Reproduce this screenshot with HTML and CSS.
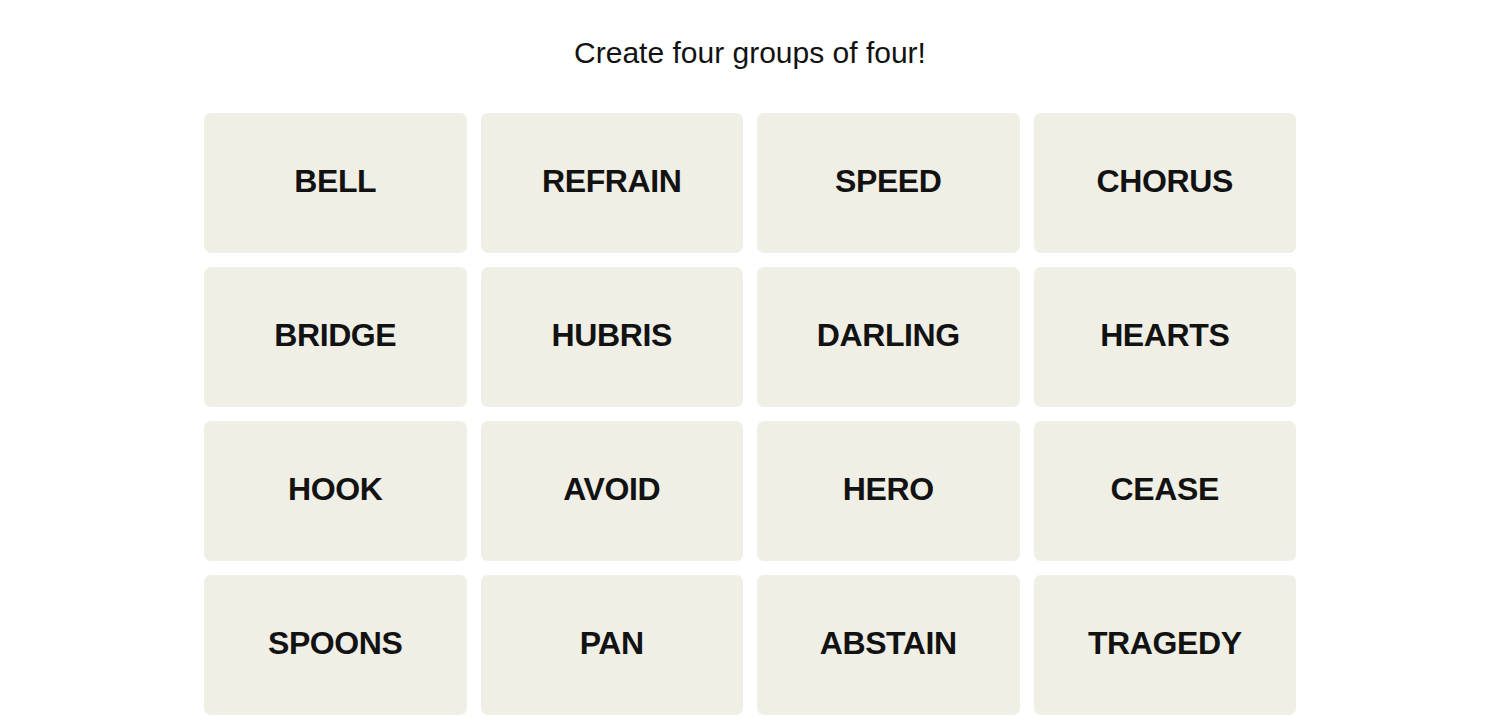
FILE: index.html
```html
<!DOCTYPE html>
<html lang="en">
<head>
<meta charset="utf-8">
<title>Connections</title>
<link rel="stylesheet" href="styles.css">
</head>
<body>
<main class="game">
  <h1 class="prompt">Create four groups of four!</h1>
  <div class="board">
    <button class="tile">BELL</button>
    <button class="tile">REFRAIN</button>
    <button class="tile">SPEED</button>
    <button class="tile">CHORUS</button>
    <button class="tile">BRIDGE</button>
    <button class="tile">HUBRIS</button>
    <button class="tile">DARLING</button>
    <button class="tile">HEARTS</button>
    <button class="tile">HOOK</button>
    <button class="tile">AVOID</button>
    <button class="tile">HERO</button>
    <button class="tile">CEASE</button>
    <button class="tile">SPOONS</button>
    <button class="tile">PAN</button>
    <button class="tile">ABSTAIN</button>
    <button class="tile">TRAGEDY</button>
  </div>
</main>
</body>
</html>
```
FILE: styles.css
```css
* { box-sizing: border-box; }
html, body {
  margin: 0;
  padding: 0;
  background: #ffffff;
}
body {
  font-family: "Liberation Sans", Arial, sans-serif;
  color: #121212;
}
.game {
  display: flex;
  flex-direction: column;
  align-items: center;
  padding-top: 35px;
}
.prompt {
  margin: 0;
  font-size: 30px;
  font-weight: 400;
  line-height: 36px;
  color: #121212;
}
.board {
  margin-top: 42px;
  width: 1092px;
  display: grid;
  grid-template-columns: repeat(4, 1fr);
  grid-auto-rows: 140px;
  gap: 14px;
}
.tile {
  border: none;
  border-radius: 7px;
  background: #efefe6;
  color: #121212;
  font-family: "Liberation Sans", Arial, sans-serif;
  font-weight: 700;
  font-size: 32px;
  letter-spacing: -0.4px;
  display: flex;
  align-items: center;
  justify-content: center;
  padding: 0 0 4px 0;
  cursor: pointer;
}
```
